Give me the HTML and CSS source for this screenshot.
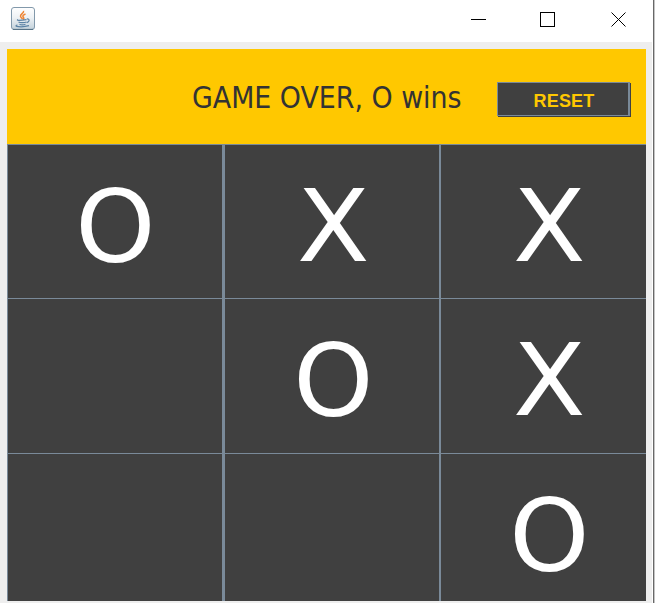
FILE: index.html
```html
<!DOCTYPE html>
<html lang="en">
<head>
<meta charset="utf-8">
<title>Tic Tac Toe</title>
<link rel="stylesheet" href="styles.css">
</head>
<body>
<div class="window">
  <header class="titlebar">
    <svg class="java" width="24" height="24" viewBox="0 0 24 24" fill="none">
      <defs><linearGradient id="tile" x2="0" y2="1"><stop stop-color="#fff"/><stop offset=".45" stop-color="#eef2f5"/><stop offset="1" stop-color="#c3d1da"/></linearGradient></defs>
      <rect x=".5" y=".5" width="23" height="22" rx="2.5" fill="url(#tile)" stroke="#8299ab"/>
      <path d="M2 22.400h20" stroke="#526f83"/>
      <path d="M12.500 3.800c1 2-3.500 3.500-3 5.500.2 1 1.500 1.700 1.800 2.700M14.500 7c-4 1.500-2.500 2.800-1.800 3.700.5.700 0 1.300-.7 2" stroke="#ee8433" stroke-width="1.500"/>
      <path d="M7 12.500c-2 1 1 1.300 8.500.2M7.500 15c1.500 1 6 .8 8 0M8.500 17.300c1.500.8 4 .7 6 0M15.800 12c3-.6 3.200 2.700 0 3.600M6.500 18c-5 1.500 4 2.800 11.500.7" stroke="#5c83a5" stroke-width="1.200"/>
    </svg>
    <svg class="controls" width="156" height="16" viewBox="0 0 156 16" fill="none" stroke="#000">
      <path d="M0 8.500h15"/>
      <rect x="69.500" y="1.500" width="14" height="14"/>
      <path d="M140.500 1.500l14 14M154.500 1.500l-14 14"/>
    </svg>
  </header>
  <main class="frame">
    <div class="status">
      <h1 class="message"><span class="message-text">GAME OVER, O wins</span></h1>
      <button class="reset">RESET</button>
    </div>
    <div class="board">
      <div class="cell"><span class="mark o">O</span></div>
      <div class="cell"><span class="mark x">X</span></div>
      <div class="cell"><span class="mark x">X</span></div>
      <div class="cell"></div>
      <div class="cell"><span class="mark o">O</span></div>
      <div class="cell"><span class="mark x">X</span></div>
      <div class="cell"></div>
      <div class="cell"></div>
      <div class="cell"><span class="mark o">O</span></div>
    </div>
  </main>
</div>
</body>
</html>
```
FILE: styles.css
```css
* { box-sizing: border-box; }
body { margin: 0; background: #c4c4c4; overflow: hidden; }
.window {
  width: 654px;
  height: 603px;
  background: #fff;
  border-right: 1px solid #686868;
}
.titlebar {
  height: 42px;
  display: flex;
  justify-content: space-between;
  align-items: flex-start;
  padding: 7px 26px 0 11px;
}
.controls { margin-top: 4px; }
.frame {
  width: 652px;
  height: 561px;
  padding: 7px 6px 2px 7px;
  background: #eee;
}
.status {
  height: 95px;
  display: flex;
  align-items: flex-start;
  background: #ffc800;
}
.message {
  width: 490px;
  margin: 0;
  padding: 31px 0 0 185px;
  font: 30px/36px "DejaVu Sans Condensed", "DejaVu Sans", sans-serif;
  font-stretch: condensed;
  color: #333;
  white-space: nowrap;
}
.message-text {
  display: inline-block;
  transform: scaleX(.995);
  transform-origin: left;
}
.reset {
  width: 133px;
  height: 34px;
  margin: 33px 0 0;
  padding: 4px 0 0 2px;
  border: solid #7a8a99;
  border-width: 1px 2px 1px 1px;
  box-shadow: 1px 1px 0 #404040;
  background: #404040;
  color: #ffc800;
  font: bold 18px/20px "Liberation Sans", sans-serif;
  letter-spacing: .2px;
}
.board {
  height: 457px;
  display: grid;
  grid-template-columns: 217px 216px 206px;
  grid-template-rows: 154px 155px 148px;
}
.cell {
  background: #404040;
  border: 0 solid #7a8a99;
  border-top-width: 1px;
  padding: 24px 0 0 1px;
  overflow: hidden;
  text-align: center;
}
.cell:nth-child(3n + 1) { border-left-width: 1px; border-right-width: 2px; }
.cell:nth-child(3n + 2) { border-left-width: 1px; border-right-width: 1px; padding-left: 2px; }
.cell:nth-child(3n) { border-left-width: 1px; padding-left: 11px; }
.mark {
  display: inline-block;
  color: #fff;
  font: 100px/116px "DejaVu Sans", sans-serif;
}
.o { transform: translateY(.5px) scaleX(1.02); }
.x { transform: scaleX(1.06); }
```
